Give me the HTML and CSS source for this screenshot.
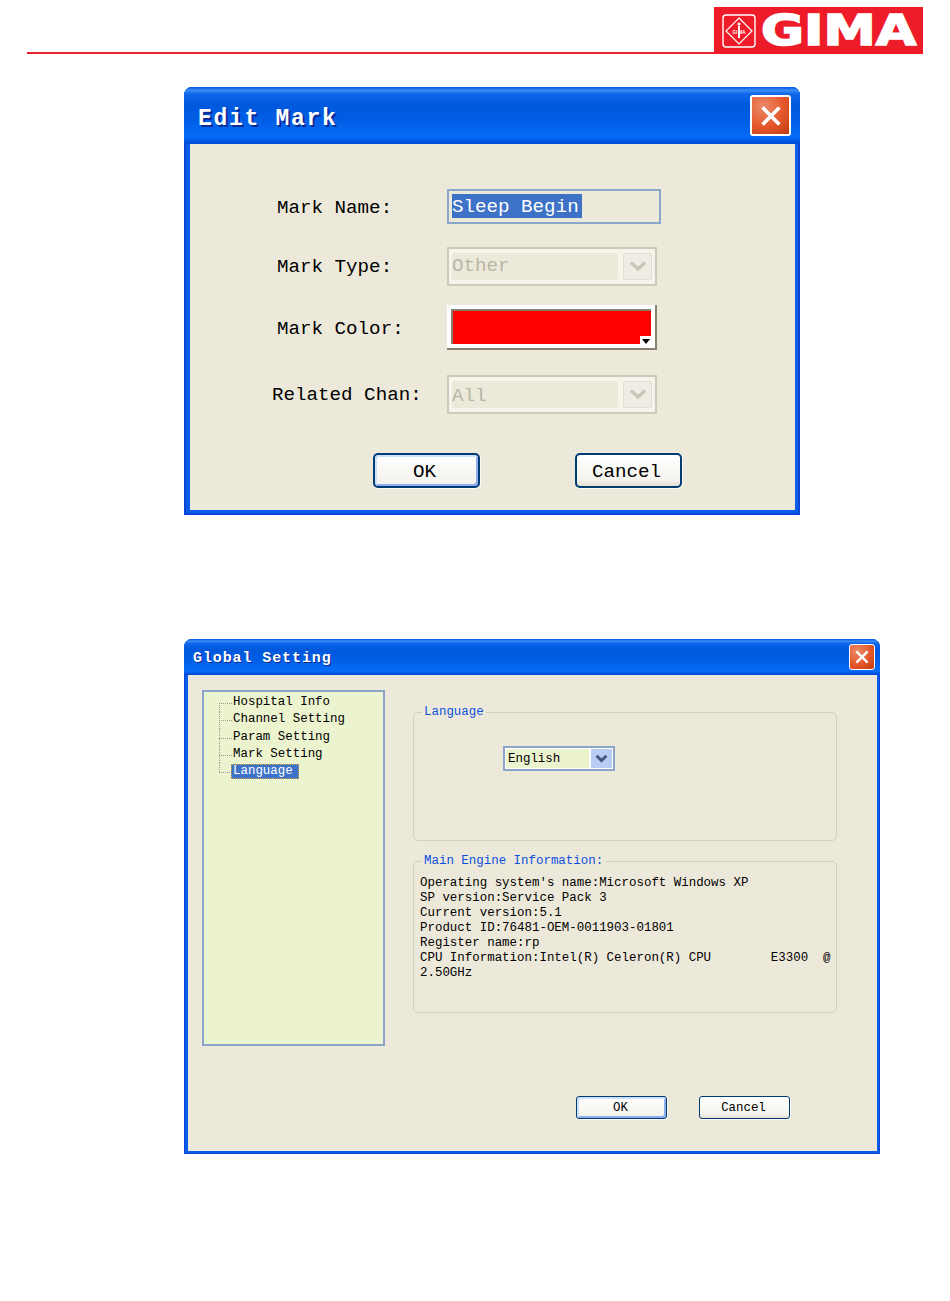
FILE: index.html
```html
<!DOCTYPE html>
<html lang="en">
  <head>
    <meta charset="UTF-8" />
    <meta name="viewport" content="width=device-width, initial-scale=1.0" />
    <title>Edit Mark and Global Setting</title>
    <link rel="stylesheet" href="styles.css">
  </head>
  <body>
    <header class="page-header">
      <div class="page-rule"></div>
      <div class="logo">
        <svg class="logo-mark" viewBox="0 0 34 34" width="34" height="34">
          <rect x="1" y="1" width="32" height="32" rx="3" fill="none" stroke="#fff" stroke-width="1.4" />
          <path d="M17 4 L30 17 L17 30 L4 17 Z" fill="none" stroke="#fff" stroke-width="1.2" />
          <circle cx="17" cy="10" r="1.6" fill="#fff" />
          <path d="M17 12 V24" stroke="#fff" stroke-width="2" />
          <text class="logo-mark-text" x="17" y="19.5" text-anchor="middle">GI  MA</text>
        </svg>
        <span class="logo-text">GIMA</span>
      </div>
    </header>

    <section class="window window-edit">
      <div class="titlebar">
        <h1 class="title">Edit Mark</h1>
        <button class="close">
          <svg viewBox="0 0 20 20" width="24" height="24">
            <path d="M3 3 L17 17 M17 3 L3 17" stroke="#fff" stroke-width="3" fill="none" />
          </svg>
        </button>
      </div>
      <div class="client edit-client">
        <div class="row row-name">
          <label class="row-label">Mark Name:</label>
          <div class="text-input"><span class="selected">Sleep Begin</span></div>
        </div>
        <div class="row">
          <label class="row-label">Mark Type:</label>
          <div class="combo-off">
            <span class="combo-off-value">Other</span>
            <span class="combo-off-btn">
              <svg viewBox="0 0 18 11" width="18" height="11"><path d="M2 1.5 L9 8 L16 1.5" stroke="#c9c6b7" stroke-width="3.4" fill="none" /></svg>
            </span>
          </div>
        </div>
        <div class="row row-color">
          <label class="row-label">Mark Color:</label>
          <div class="color-btn">
            <div class="color-fill"></div>
            <span class="color-arrow"></span>
          </div>
        </div>
        <div class="row row-last">
          <label class="row-label row-label-wide">Related Chan:</label>
          <div class="combo-off">
            <span class="combo-off-value">All</span>
            <span class="combo-off-btn">
              <svg viewBox="0 0 18 11" width="18" height="11"><path d="M2 1.5 L9 8 L16 1.5" stroke="#c9c6b7" stroke-width="3.4" fill="none" /></svg>
            </span>
          </div>
        </div>
        <div class="edit-buttons">
          <button class="btn btn-large btn-default">OK</button>
          <button class="btn btn-large">Cancel</button>
        </div>
      </div>
    </section>

    <section class="window window-global">
      <div class="titlebar">
        <h2 class="title">Global Setting</h2>
        <button class="close">
          <svg viewBox="0 0 20 20" width="16" height="16">
            <path d="M3 3 L17 17 M17 3 L3 17" stroke="#fff" stroke-width="3" fill="none" />
          </svg>
        </button>
      </div>
      <div class="client global-client">
        <div class="global-main">
          <ul class="tree">
            <li>Hospital Info</li>
            <li>Channel Setting</li>
            <li>Param Setting</li>
            <li>Mark Setting</li>
            <li><span class="tree-current">Language</span></li>
          </ul>
          <div class="groups">
            <fieldset class="group group-lang">
              <legend>Language</legend>
              <div class="combo">
                <span class="combo-value">English</span>
                <span class="combo-btn">
                  <svg viewBox="0 0 12 8" width="13" height="9"><path d="M1.5 1.5 L6 6 L10.5 1.5" stroke="#46597c" stroke-width="2.8" fill="none" /></svg>
                </span>
              </div>
            </fieldset>
            <fieldset class="group group-info">
              <legend>Main Engine Information:</legend>
              <p class="info">Operating system's name:Microsoft Windows XP
SP version:Service Pack 3
Current version:5.1
Product ID:76481-OEM-0011903-01801
Register name:rp
CPU Information:Intel(R) Celeron(R) CPU        E3300  @
2.50GHz</p>
            </fieldset>
          </div>
        </div>
        <div class="global-buttons">
          <button class="btn btn-default">OK</button>
          <button class="btn">Cancel</button>
        </div>
      </div>
    </section>
  </body>
</html>
```

FILE: styles.css
```css
*,
*::before,
*::after {
  box-sizing: border-box;
  padding: 0;
  margin: 0;
}

body {
  width: 950px;
  min-height: 1301px;
  background-color: #fff;
  font-family: 'Liberation Mono', monospace;
  color: #000;
}

/* page header */
.page-header {
  display: flex;
  align-items: flex-end;
  padding: 7px 27px 0;
}

.page-rule {
  flex: 1;
  height: 2px;
  background-color: #e8202c;
}

.logo {
  width: 209px;
  height: 47px;
  display: flex;
  align-items: center;
  gap: 5px;
  padding-left: 8px;
  background-color: #ed1c28;
}

.logo-mark-text {
  font-family: 'Liberation Sans', sans-serif;
  font-size: 4.5px;
  font-weight: bold;
  fill: #fff;
}

.logo-text {
  display: block;
  font-family: 'DejaVu Sans', sans-serif;
  font-size: 43px;
  font-weight: bold;
  line-height: 47px;
  color: #fff;
  -webkit-text-stroke: 1.6px #fff;
  transform: scaleX(1.22);
  transform-origin: left center;
}

/* xp window */
.window {
  margin-left: 184px;
  border-style: solid;
  border-color: #0a45d8;
  border-width: 0 2px 2px;
  border-radius: 8px 8px 0 0;
  background-color: #0c5cec;
}

.window-edit {
  width: 616px;
  height: 428px;
  margin-top: 33px;
}

.window-global {
  width: 696px;
  height: 515px;
  margin-top: 124px;
  border-width: 0 1px 1px;
}

.titlebar {
  display: flex;
  align-items: center;
  justify-content: space-between;
  margin: 0 -2px;
  border-radius: 8px 8px 0 0;
  background: linear-gradient(
    #0054e3 0,
    #3d8df6 6%,
    #0f68ec 12%,
    #0058dc 30%,
    #005fe6 60%,
    #066bf8 88%,
    #0048d6 100%
  );
}

.window-edit .titlebar {
  height: 57px;
  padding: 0 9px 0 14px;
}

.window-global .titlebar {
  height: 36px;
  margin: 0 -1px;
  padding: 0 5px 0 9px;
}

.title {
  color: #fff;
  font-weight: bold;
}

.window-edit .title {
  padding-top: 6px;
  font-size: 23px;
  letter-spacing: 1.7px;
  text-shadow: 2px 2px 0 #0a2a96;
}

.window-global .title {
  padding-top: 2px;
  font-size: 15px;
  letter-spacing: 0.9px;
  text-shadow: 1px 1px 0 #0a2a96;
}

.close {
  display: flex;
  align-items: center;
  justify-content: center;
  border: 1px solid #fff;
  border-radius: 3px;
  background: radial-gradient(circle at 30% 25%, #ea8a68, #e4572a 55%, #c13a10);
}

.window-edit .close {
  width: 41px;
  height: 41px;
  border-width: 2px;
}

.window-global .close {
  width: 26px;
  height: 26px;
}

.client {
  background-color: #ede9da;
}

/* edit mark */
.edit-client {
  height: 366px;
  margin: 0 3px 3px 4px;
  padding: 45px 0 0 87px;
  font-size: 19.2px;
}

.row {
  display: flex;
  align-items: center;
  margin-bottom: 19px;
}

.row-name {
  margin-bottom: 23px;
}

.row-name .row-label,
.row-color .row-label {
  padding-top: 3px;
}

.row-color {
  margin-bottom: 25px;
}

.row-last {
  margin-bottom: 39px;
}

.row-last .combo-off-value {
  line-height: 30px;
}

.row-label {
  width: 170px;
}

.row-label-wide {
  width: 175px;
  margin-left: -5px;
}

.text-input {
  width: 214px;
  height: 35px;
  padding: 3px;
  border: 2px solid #8aa6c8;
}

.selected {
  display: inline-block;
  height: 24px;
  line-height: 27px;
  padding-right: 3px;
  background-color: #3d72c6;
  color: #fff;
}

.combo-off {
  width: 210px;
  height: 39px;
  display: flex;
  border: 2px solid #cdcabc;
  background-color: #f5f3ea;
  padding: 4px 3px 4px 3px;
  gap: 5px;
}

.combo-off-value {
  flex: 1;
  line-height: 26px;
  background-color: #ede9da;
  color: #b8b5a6;
}

.combo-off-btn {
  width: 29px;
  display: flex;
  align-items: center;
  justify-content: center;
  border-radius: 2px;
  background-color: #eeece3;
  border: 1px solid #e2e0d6;
}

.color-btn {
  position: relative;
  width: 210px;
  height: 45px;
  padding: 4px;
  border-style: solid;
  border-width: 0 2px 2px 0;
  border-color: #86826f;
  background-color: #fff;
}

.color-fill {
  width: 100%;
  height: 35px;
  border-style: solid;
  border-width: 2px 0 0 2px;
  border-color: #86826f;
  background-color: #f00;
}

.color-arrow {
  position: absolute;
  right: 2px;
  bottom: 4px;
  width: 13px;
  height: 8px;
  background-color: #fff;
}

.color-arrow::after {
  content: '';
  position: absolute;
  left: 2px;
  top: 3px;
  border-style: solid;
  border-width: 5px 4.5px 0;
  border-color: #000 transparent transparent;
}

.btn {
  width: 91px;
  height: 23px;
  border: 1px solid #003c74;
  border-radius: 3px;
  background: linear-gradient(#fff, #f4f3ee 80%, #e3e0d2);
  font-family: 'Liberation Mono', monospace;
  font-size: 12.4px;
  color: #000;
  box-shadow: 1px 1px 0 #fbfaf6;
}

.btn-default {
  background: linear-gradient(#fff, #f2f1ea);
  box-shadow: inset 2px 2px 0 #cfe0fa, inset -2px -2px 0 #8eaeec, 1px 1px 0 #fbfaf6;
}

.btn-large {
  width: 107px;
  height: 35px;
  border-width: 2px;
  border-radius: 5px;
  font-size: 19.2px;
  padding: 2px 4px 0 0;
}

.edit-buttons {
  display: flex;
  gap: 95px;
  padding-left: 96px;
}

/* global setting */
.global-client {
  height: 476px;
  margin: 0 2px 2px 3px;
  padding: 15px 0 0 14px;
  font-size: 12.45px;
}

.global-main {
  display: flex;
  align-items: flex-start;
  gap: 28px;
}

.tree {
  width: 183px;
  height: 356px;
  padding: 2px 0 0 15px;
  border: 2px solid #8aa6c8;
  background-color: #ecf3cf;
  list-style: none;
}

.tree li {
  position: relative;
  height: 17.3px;
  padding-left: 14px;
  line-height: 17.3px;
}

/* dotted branch lines */
.tree li::before {
  content: '';
  position: absolute;
  left: 0;
  top: 9px;
  width: 13px;
  border-top: 1px dotted #9a9a8c;
}

.tree li::after {
  content: '';
  position: absolute;
  left: 0;
  top: 0;
  height: 100%;
  border-left: 1px dotted #9a9a8c;
}

.tree li:first-child::after {
  top: 9px;
  height: 9px;
}

.tree li:last-child::after {
  height: 9px;
}

.tree-current {
  display: inline-block;
  height: 15px;
  line-height: 13px;
  margin-left: -2px;
  padding: 0 5px 0 1px;
  border: 1px dotted #e8a33c;
  background-color: #3d72c6;
  color: #fff;
}

.groups {
  width: 424px;
  padding-top: 13px;
}

.group {
  border: 1px solid #d2cfbf;
  border-radius: 5px;
}

.group legend {
  margin-left: 8px;
  padding: 0 2px;
  font-size: 12.45px;
  line-height: 18px;
  color: #0a50e0;
}

.group-lang {
  height: 138px;
  margin-bottom: 11px;
}

.group-info {
  height: 161px;
}

.combo {
  width: 112px;
  height: 25px;
  display: flex;
  margin: 25px 0 0 89px;
  padding: 1px;
  border: 2px solid #8aa6c8;
  background-color: #fff;
}

.combo-value {
  flex: 1;
  padding-left: 2px;
  line-height: 21px;
  background-color: #ecf3cf;
}

.combo-btn {
  width: 21px;
  margin-left: 2px;
  display: flex;
  align-items: center;
  justify-content: center;
  background-color: #b9cdf2;
}

.info {
  margin: 6px 0 0 6px;
  line-height: 15px;
  white-space: pre;
}

.global-buttons {
  display: flex;
  gap: 32px;
  margin-top: 50px;
  padding-left: 374px;
}

.global-buttons .btn {
  padding-right: 2px;
}
```
